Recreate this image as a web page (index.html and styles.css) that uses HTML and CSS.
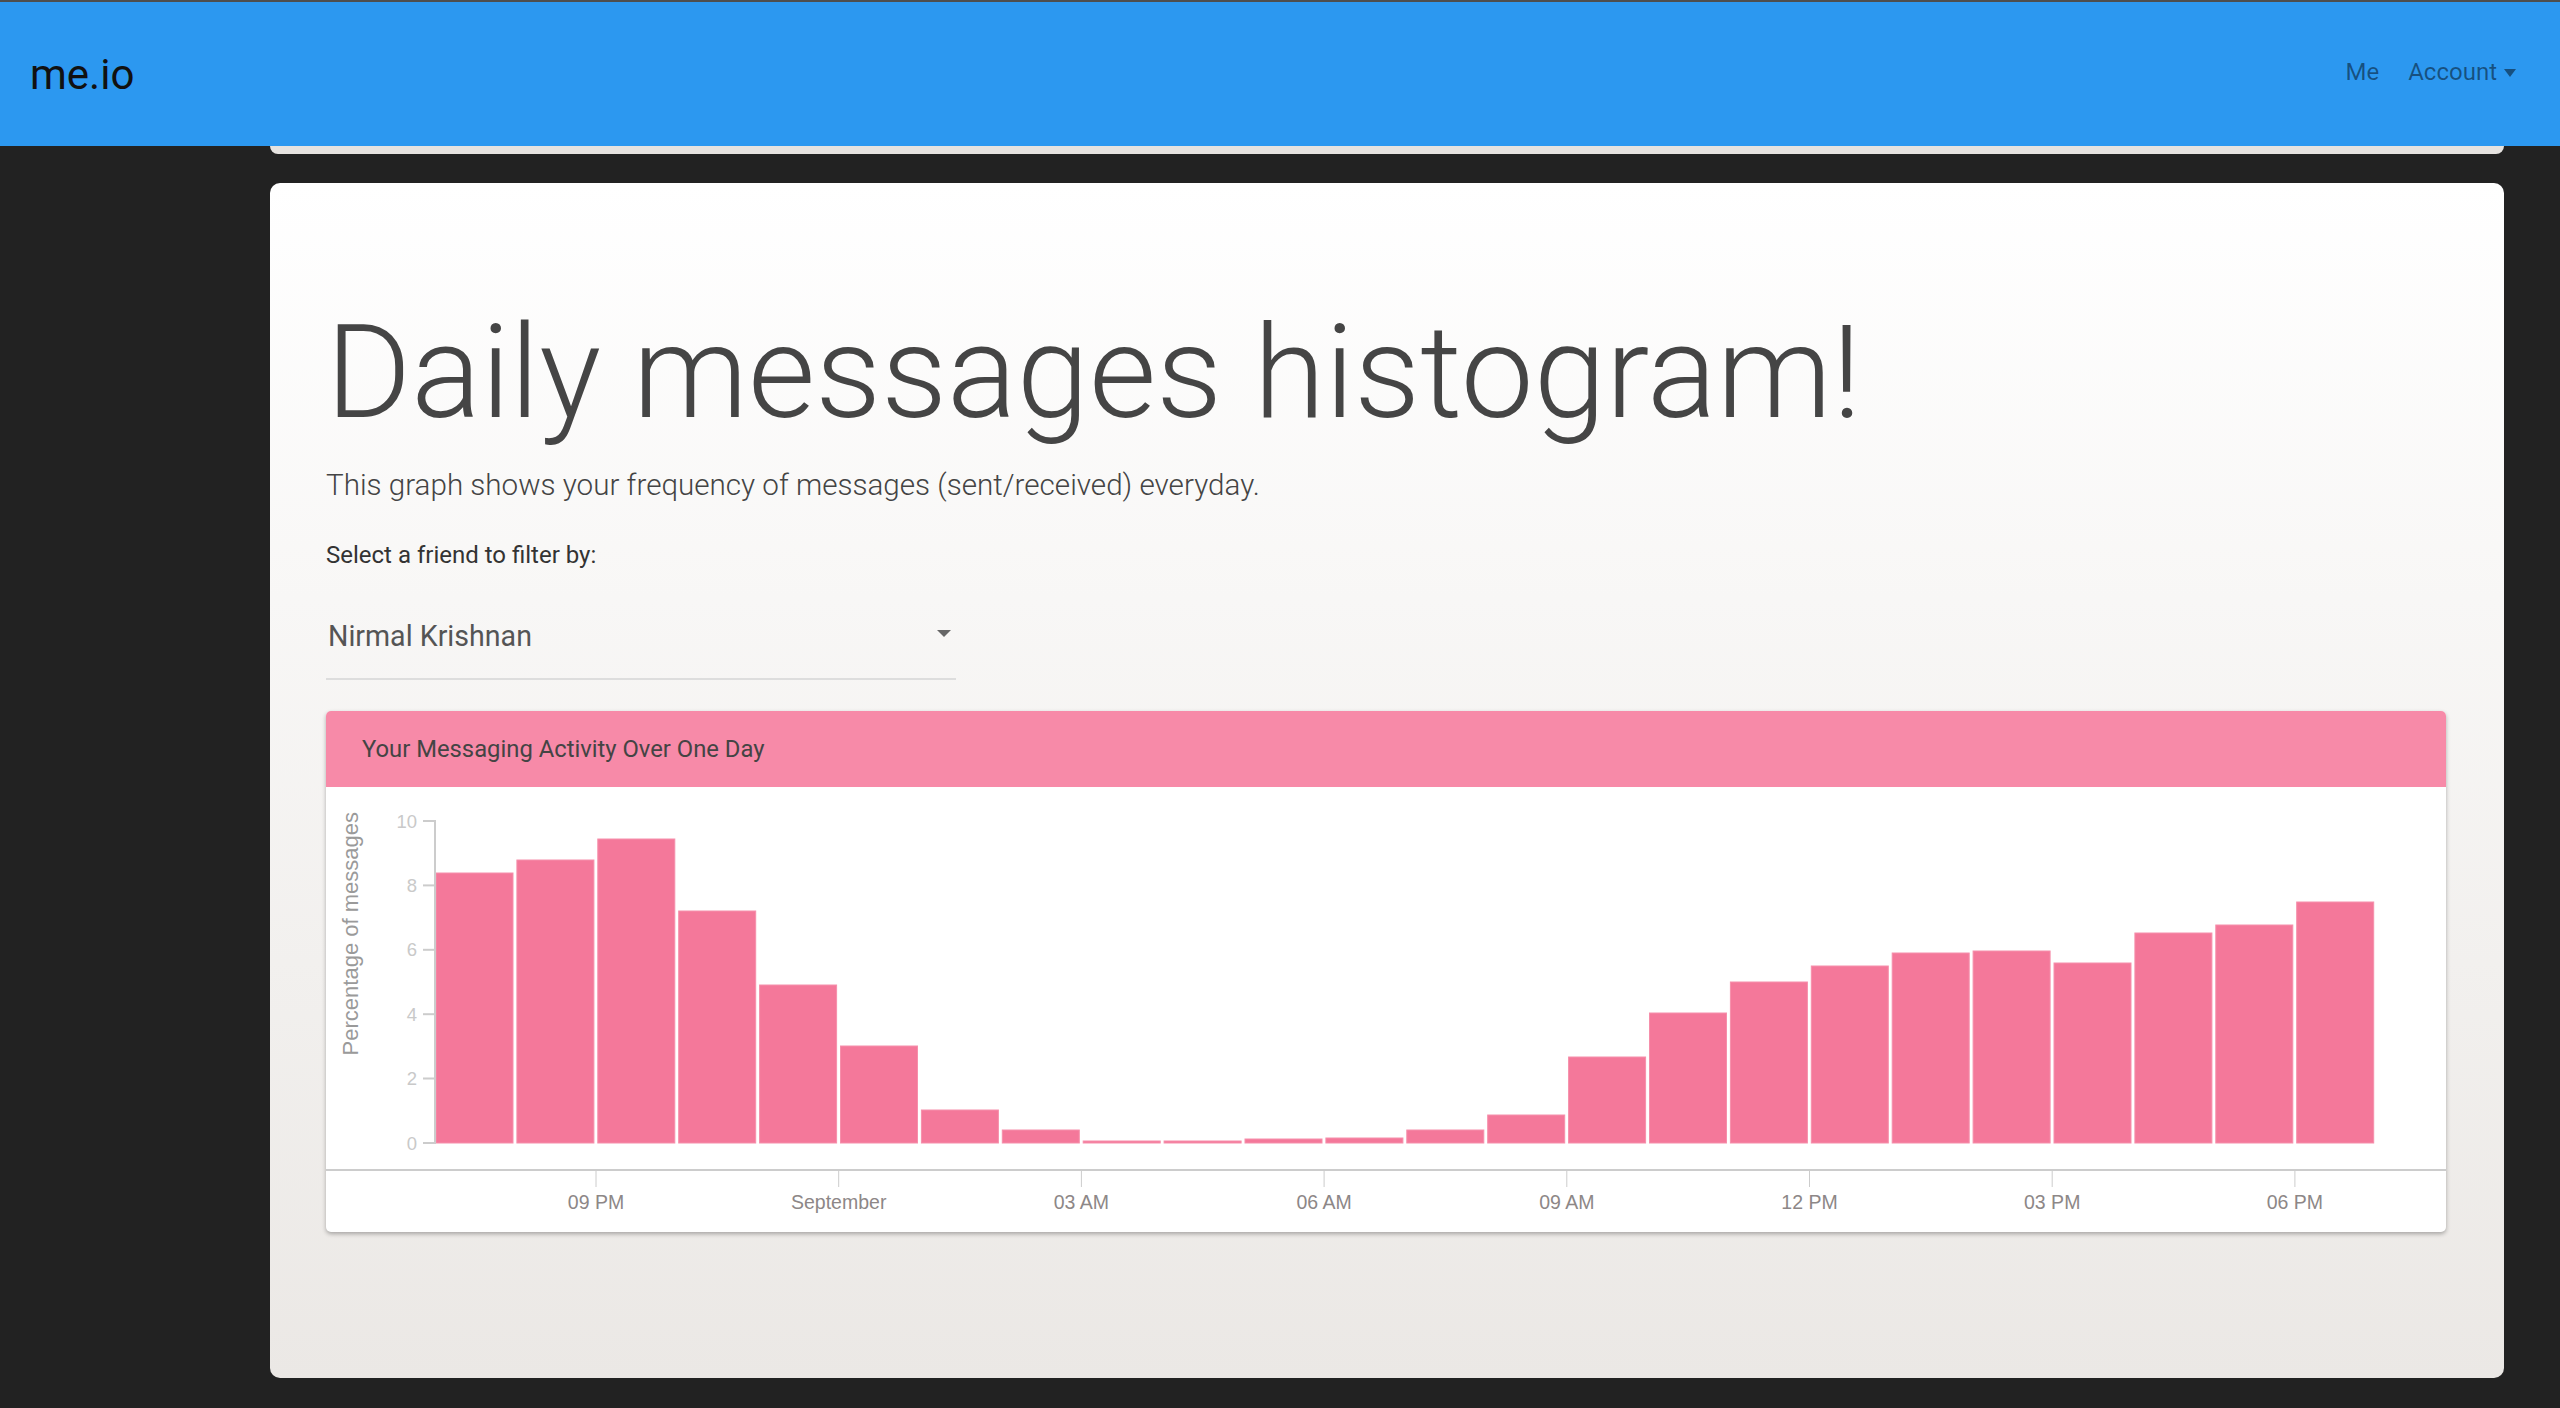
FILE: index.html
```html
<!DOCTYPE html>
<html lang="en">
<head>
<meta charset="utf-8">
<title>me.io</title>
<link rel="stylesheet" href="styles.css">
</head>
<body>
<nav class="navbar">
  <a class="brand" href="#">me.io</a>
  <div class="nav-links">
    <a class="nav-link" href="#">Me</a>
    <a class="nav-link dropdown" href="#">Account<span class="caret"></span></a>
  </div>
</nav>
<div class="peek-card"></div>
<main class="card">
  <h1 class="title">Daily messages histogram!</h1>
  <p class="lead">This graph shows your frequency of messages (sent/received) everyday.</p>
  <label class="filter-label">Select a friend to filter by:</label>
  <div class="select">
    <span class="select-value">Nirmal Krishnan</span>
    <span class="select-arrow"></span>
  </div>
  <section class="chart-card">
    <header class="chart-header">Your Messaging Activity Over One Day</header>
    <svg class="chart" width="2122" height="445" viewBox="0 0 2122 445">
      <g class="bars" fill="#f4789a" stroke="#f68fab" stroke-width="1">
        <rect x="110" y="86" width="77" height="270"/>
        <rect x="190.9" y="73" width="77" height="283"/>
        <rect x="271.8" y="52" width="77" height="304"/>
        <rect x="352.7" y="124" width="77" height="232"/>
        <rect x="433.6" y="198" width="77" height="158"/>
        <rect x="514.5" y="259" width="77" height="97"/>
        <rect x="595.4" y="323" width="77" height="33"/>
        <rect x="676.3" y="343" width="77" height="13"/>
        <rect x="757.2" y="354" width="77" height="2"/>
        <rect x="838.1" y="354" width="77" height="2"/>
        <rect x="919" y="352" width="77" height="4"/>
        <rect x="999.9" y="351" width="77" height="5"/>
        <rect x="1080.8" y="343" width="77" height="13"/>
        <rect x="1161.7" y="328" width="77" height="28"/>
        <rect x="1242.6" y="270" width="77" height="86"/>
        <rect x="1323.5" y="226" width="77" height="130"/>
        <rect x="1404.4" y="195" width="77" height="161"/>
        <rect x="1485.3" y="179" width="77" height="177"/>
        <rect x="1566.2" y="166" width="77" height="190"/>
        <rect x="1647.1" y="164" width="77" height="192"/>
        <rect x="1728" y="176" width="77" height="180"/>
        <rect x="1808.9" y="146" width="77" height="210"/>
        <rect x="1889.8" y="138" width="77" height="218"/>
        <rect x="1970.7" y="115" width="77" height="241"/>
      </g>
      <g class="y-axis" stroke="#cccccc" stroke-width="2">
        <line x1="109" y1="33" x2="109" y2="357"/>
        <line x1="97" y1="34" x2="109" y2="34"/>
        <line x1="97" y1="98.4" x2="109" y2="98.4"/>
        <line x1="97" y1="162.8" x2="109" y2="162.8"/>
        <line x1="97" y1="227.2" x2="109" y2="227.2"/>
        <line x1="97" y1="291.6" x2="109" y2="291.6"/>
        <line x1="97" y1="356" x2="109" y2="356"/>
      </g>
      <g class="y-labels" text-anchor="end">
        <text x="91" y="40.5">10</text>
        <text x="91" y="104.9">8</text>
        <text x="91" y="169.3">6</text>
        <text x="91" y="233.7">4</text>
        <text x="91" y="298.1">2</text>
        <text x="91" y="362.5">0</text>
      </g>
      <text class="y-title" transform="translate(32,25) rotate(-90)" text-anchor="end">Percentage of messages</text>
      <g class="x-axis" stroke="#cccccc">
        <line x1="0" y1="383" x2="2122" y2="383" stroke-width="2"/>
        <line x1="270" y1="383" x2="270" y2="400"/>
        <line x1="512.7" y1="383" x2="512.7" y2="400"/>
        <line x1="755.4" y1="383" x2="755.4" y2="400"/>
        <line x1="998.1" y1="383" x2="998.1" y2="400"/>
        <line x1="1240.8" y1="383" x2="1240.8" y2="400"/>
        <line x1="1483.5" y1="383" x2="1483.5" y2="400"/>
        <line x1="1726.2" y1="383" x2="1726.2" y2="400"/>
        <line x1="1968.9" y1="383" x2="1968.9" y2="400"/>
      </g>
      <g class="x-labels" text-anchor="middle">
        <text x="270" y="422">09 PM</text>
        <text x="512.7" y="422">September</text>
        <text x="755.4" y="422">03 AM</text>
        <text x="998.1" y="422">06 AM</text>
        <text x="1240.8" y="422">09 AM</text>
        <text x="1483.5" y="422">12 PM</text>
        <text x="1726.2" y="422">03 PM</text>
        <text x="1968.9" y="422">06 PM</text>
      </g>
    </svg>
  </section>
</main>
</body>
</html>
```

FILE: styles.css
```css
* {
  box-sizing: border-box;
}

html, body {
  margin: 0;
  padding: 0;
}

body {
  background: #222222;
  font-family: Roboto, "Noto Sans", sans-serif;
  color: #444444;
  min-height: 1408px;
}

.navbar {
  height: 146px;
  background: #2c98f0;
  border-top: 2px solid #4e4e4e;
  display: flex;
  align-items: center;
  justify-content: space-between;
  padding: 0 44px 0 30px;
}

.brand {
  font-size: 42px;
  color: #111111;
  text-decoration: none;
  line-height: normal;
}

.nav-links {
  display: flex;
  align-items: center;
  gap: 29px;
  padding-bottom: 4px;
}

.nav-link {
  font-size: 24px;
  color: rgba(0, 0, 0, 0.47);
  text-decoration: none;
  display: flex;
  align-items: center;
}

.caret {
  display: inline-block;
  margin-left: 7px;
  margin-top: 2px;
  width: 0;
  height: 0;
  border-left: 6.5px solid transparent;
  border-right: 6.5px solid transparent;
  border-top: 8px solid rgba(0, 0, 0, 0.47);
}

.peek-card {
  margin-left: 270px;
  width: 2234px;
  height: 8px;
  background: #e6e3e0;
  border-radius: 0 0 8px 8px;
}

.card {
  margin: 29px 0 0 270px;
  width: 2234px;
  height: 1195px;
  border-radius: 10px;
  background: linear-gradient(to bottom, #ffffff 0%, #ebe8e5 100%);
  padding: 112px 58px 0 56px;
  display: flex;
  flex-direction: column;
  align-items: flex-start;
}

.title {
  margin: 0;
  font-size: 130px;
  font-weight: 300;
  line-height: 156px;
  color: #454545;
}

.lead {
  margin: 12px 0 0;
  font-size: 29.6px;
  font-weight: 300;
  line-height: 45px;
  color: #444444;
}

.filter-label {
  margin-top: 29px;
  font-size: 24px;
  line-height: 36px;
  color: #333333;
}

.select {
  margin-top: 42px;
  width: 630px;
  padding: 0 0 21px 2px;
  border-bottom: 2px solid #dddddd;
  display: flex;
  align-items: center;
  justify-content: space-between;
}

.select-value {
  font-size: 28.6px;
  line-height: 42px;
  color: #555555;
}

.select-arrow {
  width: 0;
  height: 0;
  margin-right: 5px;
  margin-top: -6px;
  border-left: 7px solid transparent;
  border-right: 7px solid transparent;
  border-top: 7px solid #666666;
}

.chart-card {
  margin-top: 31px;
  width: 100%;
  background: #ffffff;
  border-radius: 5px;
  box-shadow: 0 2px 4px rgba(0, 0, 0, 0.3);
  overflow: hidden;
}

.chart-header {
  height: 76px;
  background: #f78aa8;
  display: flex;
  align-items: center;
  padding-left: 36px;
  font-size: 23.8px;
  color: #444444;
}

.chart {
  display: block;
}

.y-labels text {
  font-family: "Liberation Sans", Arial, sans-serif;
  font-size: 18.5px;
  fill: #c9c9c9;
}

.y-title {
  font-family: "Liberation Sans", Arial, sans-serif;
  font-size: 22px;
  fill: #9a9a9a;
}

.x-labels text {
  font-family: "Liberation Sans", Arial, sans-serif;
  font-size: 19.5px;
  fill: #8d8787;
}
```
